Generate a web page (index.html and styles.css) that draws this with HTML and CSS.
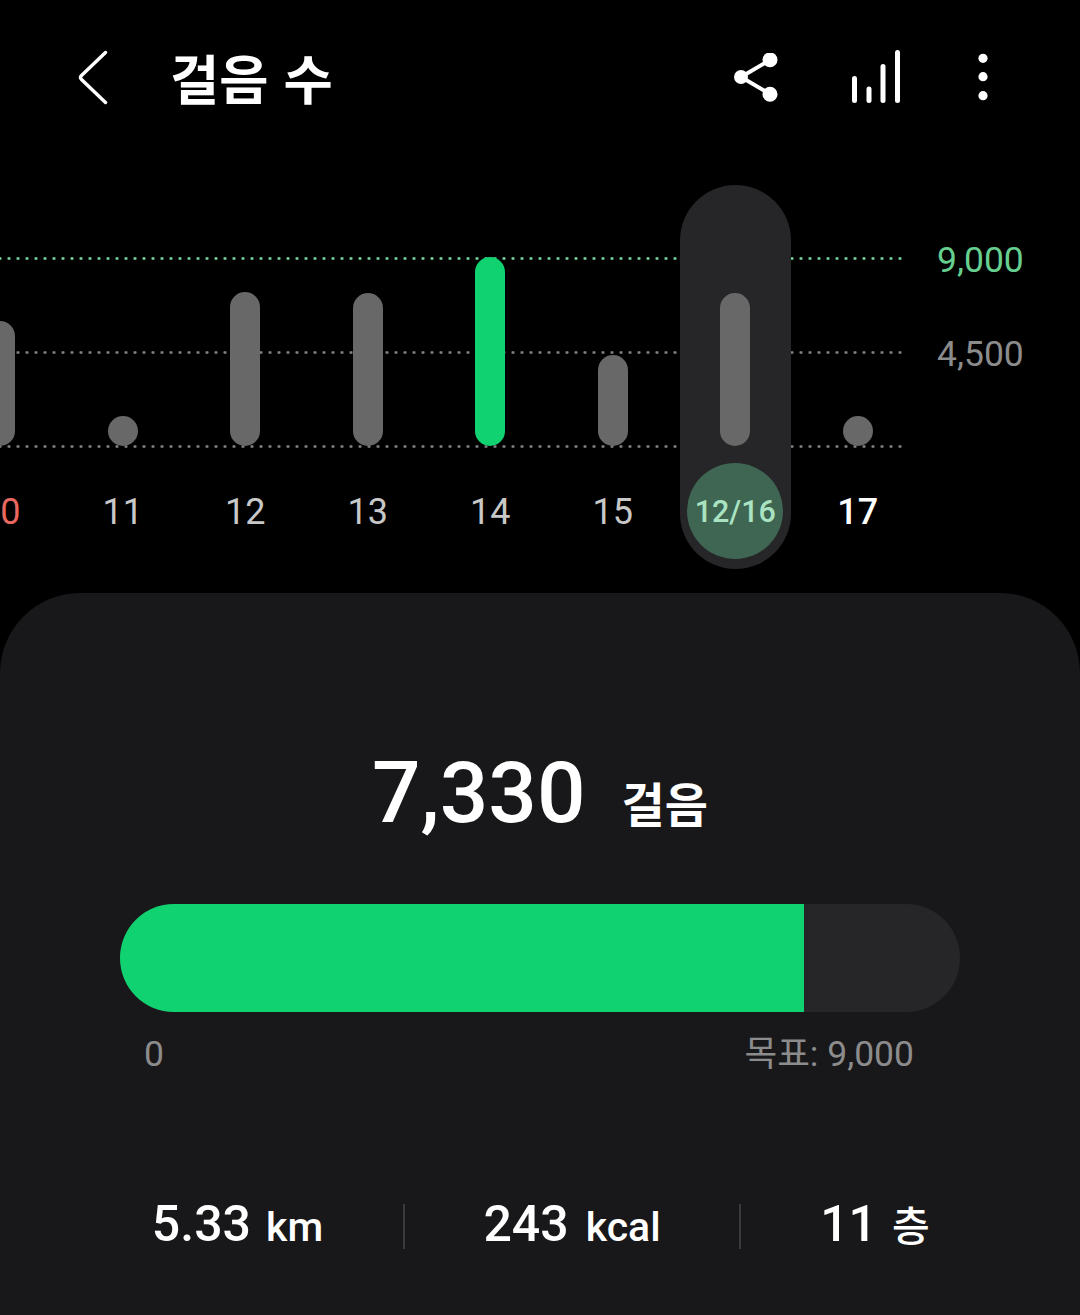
FILE: index.html
```html
<!DOCTYPE html>
<html lang="ko">
<head>
    <meta charset="UTF-8">
    <title>걸음 수</title>
    <link rel="stylesheet" href="styles.css">
</head>
<body>
    <header class="topbar">
        <svg class="icon-back" width="30" height="56" viewBox="0 0 30 56">
            <path d="M27.5 2.500 L3.500 25.500 Q1.500 27.500 3.500 29.500 L27.5 52.500" fill="none" stroke="#fff" stroke-width="3.4" stroke-linecap="round"/>
        </svg>
        <h1 class="title">걸음 수</h1>
        <div class="actions">
            <svg class="icon-share" width="44" height="50" viewBox="0 0 44 50">
                <path d="M36 7 L7 24 L36 41" fill="none" stroke="#fff" stroke-width="4"/>
                <circle cx="36" cy="6.800" r="7.500" fill="#fff"/>
                <circle cx="7" cy="24" r="7" fill="#fff"/>
                <circle cx="36" cy="41.200" r="7.500" fill="#fff"/>
            </svg>
            <svg class="icon-bars" width="50" height="56" viewBox="0 0 50 56">
                <g stroke="#fff" stroke-width="5" stroke-linecap="round">
                    <path d="M3.500 28.500 V50.500"/>
                    <path d="M18 39 V50.500"/>
                    <path d="M32 16.500 V50.500"/>
                    <path d="M46.500 2.500 V50.500"/>
                </g>
            </svg>
            <svg class="icon-more" width="12" height="50" viewBox="0 0 12 50">
                <circle cx="6" cy="5.300" r="4.600" fill="#fff"/>
                <circle cx="6" cy="23.700" r="4.600" fill="#fff"/>
                <circle cx="6" cy="42.700" r="4.600" fill="#fff"/>
            </svg>
        </div>
    </header>

    <section class="chart">
        <div class="grid">
            <div class="grid-row goal"><span class="dots"></span><span class="axis">9,000</span></div>
            <div class="grid-row"><span class="dots"></span><span class="axis">4,500</span></div>
            <div class="grid-row"><span class="dots"></span></div>
        </div>
        <div class="days">
            <div class="day"><div class="plot"><div class="bar" style="height: 125px"></div></div><div class="day-label sunday">10</div></div>
            <div class="day"><div class="plot"><div class="bar" style="height: 30px"></div></div><div class="day-label">11</div></div>
            <div class="day"><div class="plot"><div class="bar" style="height: 154px"></div></div><div class="day-label">12</div></div>
            <div class="day"><div class="plot"><div class="bar" style="height: 153px"></div></div><div class="day-label">13</div></div>
            <div class="day"><div class="plot"><div class="bar reached" style="height: 189px"></div></div><div class="day-label">14</div></div>
            <div class="day"><div class="plot"><div class="bar" style="height: 91px"></div></div><div class="day-label">15</div></div>
            <div class="day selected"><div class="plot"><div class="bar" style="height: 153px"></div></div><div class="day-label">12/16</div></div>
            <div class="day today"><div class="plot"><div class="bar" style="height: 30px"></div></div><div class="day-label">17</div></div>
        </div>
    </section>

    <main class="card">
        <div class="total"><span class="total-num">7,330</span><span class="total-unit">걸음</span></div>
        <div class="progress"><div class="progress-fill" style="width: 684px"></div></div>
        <div class="progress-labels"><span>0</span><span>목표: 9,000</span></div>
        <div class="stats">
            <div class="stat"><b>5.33</b><span>km</span></div>
            <div class="stat"><b>243</b><span>kcal</span></div>
            <div class="stat"><b>11</b><span>층</span></div>
        </div>
    </main>
</body>
</html>
```

FILE: styles.css
```css
* {
    box-sizing: border-box;
}

body {
    background-color: #000;
    color: #fff;
    margin: 0;
    width: 1080px;
    height: 1315px;
    overflow: hidden;
    font-family: Roboto, "Noto Sans CJK KR", sans-serif;
}

/* Top bar */
.topbar {
    display: flex;
    align-items: center;
    height: 156px;
    padding: 0 91px 0 78px;
}

.title {
    margin: 0 0 2px 62px;
    font-family: "Noto Sans CJK KR", sans-serif;
    font-size: 53.500px;
    font-weight: 700;
    line-height: 64px;
    letter-spacing: 0;
}

.actions {
    display: flex;
    align-items: center;
    gap: 73px;
    margin-left: auto;
}

.icon-more {
    margin-left: 3px;
}

/* Chart */
.chart {
    position: relative;
    height: 437px;
}

.grid {
    position: absolute;
    top: 101px;
    left: 0;
    width: 100%;
    height: 191px;
    display: flex;
    flex-direction: column;
    justify-content: space-between;
}

.grid-row {
    display: flex;
    align-items: center;
    height: 3px;
}

.dots {
    width: 903px;
    height: 3px;
    background-image: radial-gradient(circle, #808083 1.2px, transparent 1.7px);
    background-position: -4.500px 0;
    background-size: 9px 3px;
}

.goal .dots {
    background-image: radial-gradient(circle, #74d49c 1.2px, transparent 1.7px);
}

.axis {
    position: relative;
    top: 2px;
    margin-left: 34px;
    font-size: 35.500px;
    line-height: 3px;
    color: #8c8c8c;
}

.goal .axis {
    color: #66cf8f;
}

.days {
    position: relative;
    display: flex;
    margin-left: -61px;
}

.day {
    position: relative;
    display: flex;
    flex-direction: column;
    align-items: center;
    width: 122.500px;
}

.plot {
    position: relative;
    display: flex;
    align-items: flex-end;
    height: 290px;
}

.bar {
    width: 30px;
    border-radius: 15px;
    background-color: #686868;
}

.bar.reached {
    background-color: #11d271;
}

.day-label {
    position: relative;
    display: flex;
    align-items: center;
    justify-content: center;
    width: 96px;
    height: 96px;
    margin-top: 17px;
    padding-top: 1px;
    font-size: 36px;
    color: #c8c8c8;
}

.day-label.sunday {
    color: #e8685f;
}

.today .day-label {
    color: #fff;
    font-weight: 500;
}

/* Highlighted day behind the bar */
.selected::before {
    content: "";
    position: absolute;
    top: 29px;
    left: 5.500px;
    width: 111px;
    height: 384px;
    border-radius: 56px;
    background-color: #262628;
}

.selected .day-label {
    border-radius: 50%;
    background-color: #3f6652;
    color: #a9e3c1;
    font-size: 30.500px;
    font-weight: 500;
}

/* Summary card */
.card {
    height: 722px;
    padding: 150px 120px 0;
    border-radius: 80px 80px 0 0;
    background-color: #18181a;
}

.total {
    display: flex;
    align-items: baseline;
    justify-content: center;
    gap: 36px;
    height: 100px;
    line-height: 100px;
}

.total-num {
    font-size: 85.500px;
    font-weight: 500;
}

.total-unit {
    font-family: "Noto Sans CJK KR", sans-serif;
    font-size: 47px;
    font-weight: 700;
}

.progress {
    height: 108px;
    margin-top: 61px;
    border-radius: 54px;
    background-color: #262628;
    overflow: hidden;
}

.progress-fill {
    height: 100%;
    background-color: #11d271;
}

.progress-labels {
    display: flex;
    justify-content: space-between;
    padding: 0 46px 0 24px;
    margin-top: 20px;
    font-size: 35.500px;
    line-height: 44px;
    color: #8c8c8c;
}

.stats {
    display: flex;
    margin: 128px -34px 0 0;
}

.stat {
    flex: 0 0 auto;
    display: flex;
    align-items: baseline;
    justify-content: center;
    gap: 15px;
    height: 45px;
    line-height: 41px;
    border-left: 2px solid #3a3a3c;
}

.stat:nth-child(1) {
    width: 283px;
    padding-right: 48px;
    border-left: none;
}

.stat:nth-child(2) {
    width: 336px;
    gap: 17px;
}

.stat:nth-child(3) {
    width: 270px;
}

.stat b {
    font-size: 50px;
    font-weight: 500;
}

.stat span {
    font-size: 41px;
    font-weight: 500;
}
```
